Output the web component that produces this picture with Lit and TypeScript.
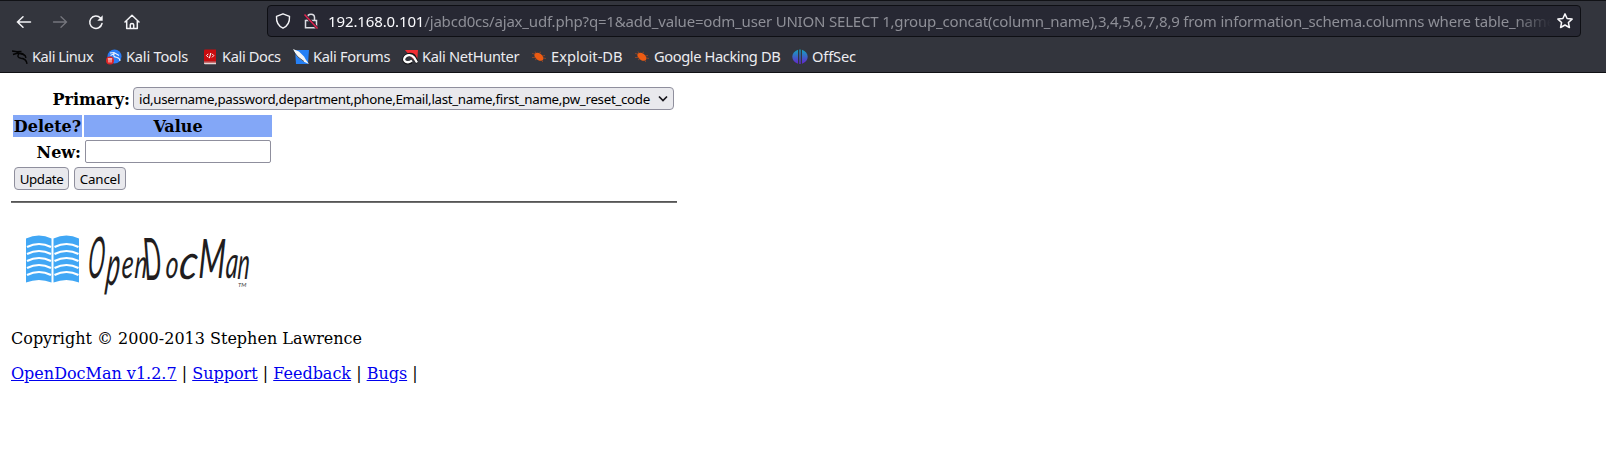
import { LitElement, html, css, svg } from "lit";
import { customElement } from "lit/decorators.js";

const dragon = svg`<path d="M0 2 5 2.800 9.500 2.500M1 5.500 6 4 10.500 5.200 13 6.500 14 9M7 4.500C5 7 6 9 9 9.300c4 .3 5.500 2 6 5.500" fill="none" stroke="#050506" stroke-width="1.400"/><path d="M8 3.500 11 4l3.500 3.500-4.500-1.800z" fill="#050506"/>`;
const tools = svg`<circle cx="8.500" cy="7.500" r="7" fill="#2b7cf5"/><path d="M4 4 8 3.500l5 3M4.500 6.500l4-2M8 5c-1 3 1 3 3 3.500s3 1.500 3 3.500" fill="none" stroke="#e8f1ff" stroke-width="1.100"/><circle cx="4" cy="11.500" r="4" fill="#e02424"/><path d="M1.800 9.800h4.400M3 10v3.500M5 10v3.500" stroke="#fff" stroke-width=".9"/>`;
const docs = svg`<path d="M2 1.500Q2 .5 3 .5h11v12H2z" fill="#c90c0f"/><path d="M2 12.500h12v2.700H3q-1 0-1-1z" fill="#e4d6d6"/><path d="M2 12.500h12v1H2z" fill="#b00b0e"/><path d="M6.300 4.800 4.500 6.600l1.800 1.800M10 4.800l1.800 1.800L10 8.400M8.800 4 7.400 9.200" stroke="#fff" stroke-width="1" fill="none"/>`;
const forums = svg`<path d="M2 1H16l-1 14H3z" fill="#2580f5"/><path d="M0 0 6 2.500l5 5 2 3.500 3 4-5.500-2.500L4 7.500z" fill="#f4f6f8"/><path d="M0 2 5 8l6 4.500" stroke="#26303c" stroke-width=".8" fill="none"/>`;
const hunter = svg`<path d="M3 1h13l-1 13L9 8z" fill="#f12d32"/><path d="M9.500 13C4 15.500 0 11.500 3 8s8-3.500 9.500 0l3 6" fill="none" stroke="#141417" stroke-width="3.500"/><path d="M10 11.500C6 15 .8 12.500 2.500 9s7-4 9.500-.5l3 5" fill="none" stroke="#fff" stroke-width="2.300"/>`;
const bug = svg`<path d="M3.500 5C6 2.500 10 4 12 7.500c1 2.500 0 4.300-1.500 4.300C7 12.300 2.500 8.500 3.500 5z" fill="#ed5b12"/><path d="M1 4.500 4 5M1 8.500h4M5 4 4 2.500M8 4.500l2-1.700M11 7l3-.5M12 9l3 .5M10 11l2 2M6 9.500l-2 1.500" stroke="#a84b22" stroke-width=".7"/>`;
const offsec = svg`<defs><linearGradient id="g" x2="0" y2="1"><stop stop-color="#14a2bd"/><stop offset="1" stop-color="#6425ce"/></linearGradient></defs><path d="M6 .8v14C2.500 13.500.3 11 .3 7.800S2.500 2 6 .8zM10 .8c3.500 1.200 5.700 3.800 5.700 7S13.500 13.500 10 14.800z" fill="url(#g)"/><path d="M7.300 .5h1.400v14.500h-1.400z" fill="url(#g)"/>`;

const bookmarks = [
  { t: "Kali Linux", i: dragon, w: 94, s: -0.48 },
  { t: "Kali Tools", i: tools, w: 96, s: -0.22 },
  { t: "Kali Docs", i: docs, w: 91, s: -0.4 },
  { t: "Kali Forums", i: forums, w: 109, s: -0.35 },
  { t: "Kali NetHunter", i: hunter, w: 129, s: -0.34 },
  { t: "Exploit-DB", i: bug, w: 103, s: 0 },
  { t: "Google Hacking DB", i: bug, w: 158, s: -0.4 },
  { t: "OffSec", i: offsec, w: 70, s: -0.15 },
];

const letters = [
  { c: "O", x: 87, y: 278, sx: 0.78, sy: 2.05, k: -5 },
  { c: "p", x: 105, y: 285, sx: 0.9, sy: 2, k: -6 },
  { c: "e", x: 121, y: 278, sx: 0.88, sy: 1.45, k: -4 },
  { c: "n", x: 134, y: 278, sx: 0.85, sy: 1.45, k: -4 },
  { c: "D", x: 146, y: 280, sx: 0.88, sy: 2.1, k: 7 },
  { c: "o", x: 165, y: 278, sx: 0.88, sy: 1.4, k: -4 },
  { c: "c", x: 178, y: 279, sx: 1.45, sy: 1.75, k: -6 },
  { c: "M", x: 198, y: 278, sx: 1.12, sy: 1.95, k: -2 },
  { c: "a", x: 225, y: 278, sx: 0.86, sy: 1.6, k: -4 },
  { c: "n", x: 237, y: 279, sx: 0.8, sy: 1.6, k: -4 },
];

@customElement("app-root")
export class AppRoot extends LitElement {
  static styles = css`
    :host { display: block; height: 476px; overflow: hidden; background: #fff; color: #000; font: 16px/19px "DejaVu Serif", serif; }
    * { box-sizing: border-box; }
    svg { display: block; flex: none; }
    .chrome { height: 73px; background: #33353d; border-top: 1px solid #111216; border-bottom: 1px solid #101115; font-family: "Noto Sans", sans-serif; color: #fbfbfe; }
    .nav { height: 41px; display: flex; align-items: center; padding: 0 25px 0 16px; }
    .tools { width: 251px; display: flex; gap: 20px; }
    .url { flex: 1; min-width: 0; height: 32px; margin-bottom: 1px; display: flex; align-items: center; background: #272833; border: 1px solid #0e0f14; border-radius: 4px; padding: 0 7px; }
    .lock { margin-left: 12px; }
    .address { flex: 1; min-width: 0; margin: 0 6px 0 9px; padding-bottom: 1px; overflow: hidden; white-space: nowrap; font-size: 15px; line-height: 24px; letter-spacing: -0.19px; color: #8e8f97; mask-image: linear-gradient(to left, transparent, #000 36px); }
    .host { color: #fbfbfe; letter-spacing: -0.12px; }
    .marks { height: 30px; display: flex; align-items: center; padding: 0 0 2px 12px; font-size: 14.67px; line-height: 20px; color: #ececf0; }
    .mark { display: flex; align-items: center; gap: 4px; white-space: nowrap; flex: none; }
    .mark svg { margin-top: 1px; }
    .mark span { margin-top: -1px; }
    .page { width: 677px; padding: 11px 0 0 11px; }
    .row { display: flex; align-items: center; font-weight: bold; }
    .primary { height: 29px; padding-left: 2px; }
    .label { text-align: right; }
    .primary .label { width: 117px; padding-top: 2px; }
    .select { width: 541px; height: 23px; margin-left: 3px; padding: 0 5px 0 5px; display: flex; align-items: center; justify-content: space-between; white-space: nowrap; background: #e9e9ed; border: 1px solid #8f8f9d; border-radius: 4px; font: 13.333px/20px "Noto Sans", sans-serif; letter-spacing: -0.31px; }
    .heads { display: grid; grid-template-columns: 69px 188px; gap: 2px; height: 22px; margin: 2px 0 0 2px; }
    .th { background: #83a7f7; text-align: center; line-height: 24px; height: 22px; font-weight: bold; }
    .new { height: 27px; margin-top: 1px; }
    .new .label { width: 70px; padding-top: 2px; }
    .input { width: 186px; height: 23px; margin-left: 4px; border: 1px solid #8f8f9d; border-radius: 2px; background: #fff; }
    .buttons { display: flex; gap: 5px; padding: 2px 0 0 3px; }
    .btn { height: 23px; border: 1px solid #8f8f9d; border-radius: 4px; background: #e9e9ed; text-align: center; font: 13.333px/22px "Noto Sans", sans-serif; }
    .update { width: 55px; letter-spacing: -0.4px; }
    .cancel { width: 52px; letter-spacing: -0.2px; }
    .rule { width: 666px; height: 2px; margin-top: 11px; background: #555; border-bottom: 1px solid #707070; }
    .logo { margin: 22px 0 0 4px; }
    .word { font-family: "Lato", sans-serif; font-style: italic; font-size: 28px; fill: #211d1e; }
    .tm { font: italic 6px "Lato", sans-serif; fill: #444; }
    .copy { margin-top: 14px; }
    .links { margin-top: 16px; white-space: pre; }
    a { color: #0000ee; text-decoration: underline; }
  `;

  render() {
    return html`
      <div class="chrome">
        <div class="nav">
          <div class="tools">
            <svg width="16" height="16" fill="none" stroke="#f4f4f7" stroke-width="1.500" stroke-linecap="round"><path d="M1.500 8H14.500M7 2.700 1.500 8 7 13.300"/></svg>
            <svg width="16" height="16" fill="none" stroke="#75767d" stroke-width="1.300" stroke-linecap="round"><path d="M1.500 8h13M9 2.700 14.500 8 9 13.300"/></svg>
            <svg width="16" height="16" fill="none" stroke="#f4f4f7" stroke-width="1.500" stroke-linecap="round"><path d="M14 9.500A6.200 6.200 0 1 1 12.500 4"/><path d="M14.700 1.300v5.400h-5.400z" fill="#f4f4f7" stroke="none"/></svg>
            <svg width="16" height="16" fill="none" stroke="#f4f4f7" stroke-width="1.500" stroke-linejoin="round" stroke-linecap="round"><path d="M1 8 8 1.300 15 8M2.700 7v7.500h10.600V7M6.300 14.500v-3.700q0-1.200 1.700-1.200t1.700 1.200v3.700"/></svg>
          </div>
          <div class="url">
            <svg width="16" height="16" fill="none" stroke="#f4f4f7" stroke-width="1.400" stroke-linejoin="round"><path d="M8 .8 14.500 3.300C14.800 8.500 13 13 8 15.200 3 13 1.200 8.500 1.500 3.300z"/></svg>
            <svg class="lock" width="16" height="16" fill="none" stroke="#dcdce2" stroke-width="1.500"><path d="M4.500 7V4.500C4.500 0 11.500 0 11.500 4.500V7M2.500 7.500h11v7.300h-11z"/><path d="M1.500 1.500 14.500 15.500" stroke="#272833" stroke-width="3"/><path d="M1.500 1.500 14.500 15.500" stroke="#e0224e"/></svg>
            <div class="address"><span class="host">192.168.0.101</span>/jabcd0cs/ajax_udf.php?q=1&amp;add_value=odm_user UNION SELECT 1,group_concat(column_name),3,4,5,6,7,8,9 from information_schema.columns where table_name</div>
            <svg width="16" height="16" fill="none" stroke="#f8f8fb" stroke-width="1.500" stroke-linejoin="round"><path d="m8 .9 2.100 4.600 5 .6-3.700 3.400 1 5L8 12l-4.400 2.500 1-5L.9 6.100l5-.6z"/></svg>
          </div>
        </div>
        <div class="marks">
          ${bookmarks.map((b) => html`<div class="mark" style="width:${b.w}px;letter-spacing:${b.s}px"><svg width="16" height="16" viewBox="0 0 16 16">${b.i}</svg><span>${b.t}</span></div>`)}
        </div>
      </div>
      <div class="page">
        <div class="row primary"><div class="label">Primary:</div><div class="select"><span>id,username,password,department,phone,Email,last_name,first_name,pw_reset_code</span><svg width="10" height="8" fill="none" stroke="#15141a" stroke-width="1.700"><path d="M1 1.500 5 5.500 9 1.500"/></svg></div></div>
        <div class="heads"><div class="th">Delete?</div><div class="th">Value</div></div>
        <div class="row new"><div class="label">New:</div><div class="input"></div></div>
        <div class="buttons"><div class="btn update">Update</div><div class="btn cancel">Cancel</div></div>
        <div class="rule"></div>
        <svg class="logo" width="250" height="90" viewBox="15 225 250 90">
          ${[26, 53.5].map((x) => svg`<path d="M${x} 238.500q13-6 25.500 0v44q-12.500-5-25.500 0z" fill="#41a7f5"/>${[0, 1, 2, 3, 4].map((n) => svg`<path d="M${x + 1} ${247 + n * 7}q12-6 24 0" fill="none" stroke="#fff" stroke-width="2.200"/>`)}`)}
          ${letters.map((l) => svg`<text class="word" transform="translate(${l.x} ${l.y}) skewX(${l.k}) scale(${l.sx} ${l.sy})">${l.c}</text>`)}
          <text class="tm" x="238" y="287">TM</text>
        </svg>
        <div class="copy">Copyright © 2000-2013 Stephen Lawrence</div>
        <div class="links"><a>OpenDocMan v1.2.7</a> | <a>Support</a> | <a>Feedback</a> | <a>Bugs</a> |</div>
      </div>
    `;
  }
}
